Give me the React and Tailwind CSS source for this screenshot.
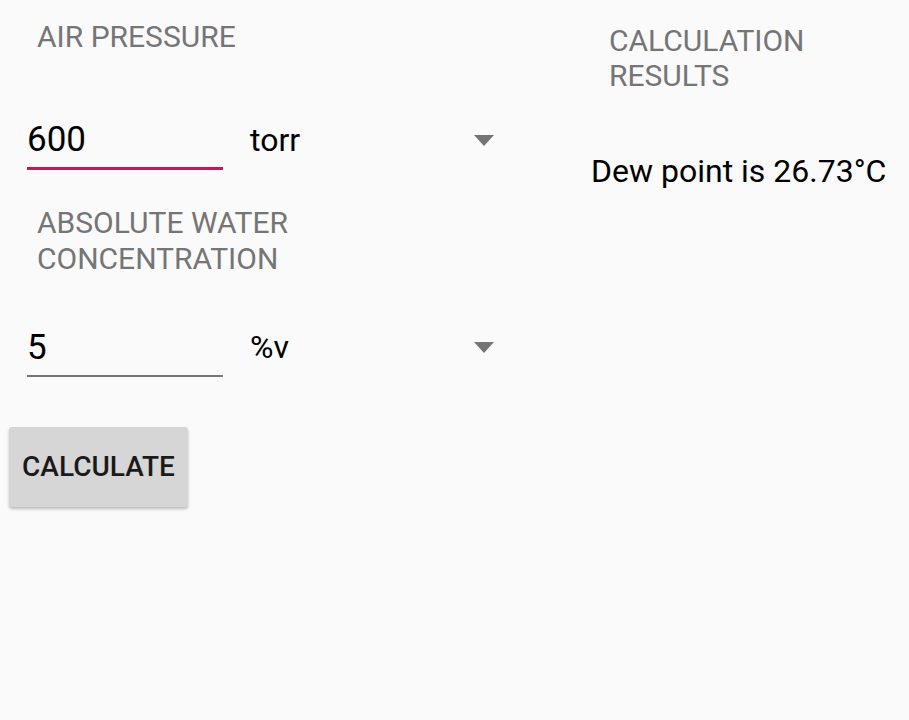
export default function App() {
  return (
    <div className="w-[909px] h-[720px] bg-[#fafafa] flex font-['Roboto',sans-serif] overflow-hidden">
      {/* Inputs column */}
      <div className="w-[560px] pl-[27px] pt-[19px] flex flex-col items-start">
        <div className="ml-[10px] text-[30px] leading-[36px] text-[#757575]">AIR PRESSURE</div>

        <div className="mt-[64px] flex items-center">
          <div className="w-[196px] text-[35px] leading-[41px] text-black pb-[7px] border-b-[3px] border-[#c2185b]">
            600
          </div>
          <div className="ml-[27px] w-[244px] flex items-center justify-between -mt-[9px]">
            <span className="text-[32px] leading-[41px] text-black">torr</span>
            <span className="w-0 h-0 border-l-[10px] border-r-[10px] border-t-[11px] border-l-transparent border-r-transparent border-t-[#757575]" />
          </div>
        </div>

        <div className="mt-[35px] ml-[10px] w-[290px] text-[30px] leading-[36px] text-[#757575]">
          ABSOLUTE WATER CONCENTRATION
        </div>

        <div className="mt-[50px] flex items-center">
          <div className="w-[196px] text-[35px] leading-[41px] text-black pb-[7px] border-b-2 border-[#757575]">
            5
          </div>
          <div className="ml-[27px] w-[244px] flex items-center justify-between -mt-[9px]">
            <span className="text-[32px] leading-[41px] text-black">%v</span>
            <span className="w-0 h-0 border-l-[10px] border-r-[10px] border-t-[11px] border-l-transparent border-r-transparent border-t-[#757575]" />
          </div>
        </div>

        <button className="mt-[50px] -ml-[18px] w-[179px] h-[80px] bg-[#d6d6d6] rounded-[3px] shadow-[0_2px_3px_rgba(0,0,0,0.25)] text-[28px] font-medium text-[#1a1a1a] flex items-center justify-center">
          CALCULATE
        </button>
      </div>

      {/* Results column */}
      <div className="ml-[31px] pt-[23px] flex flex-col">
        <div className="ml-[18px] w-[230px] text-[30px] leading-[35px] text-[#757575]">
          CALCULATION RESULTS
        </div>
        <div className="mt-[59px] text-[32px] leading-[39px] text-black whitespace-nowrap">
          Dew point is 26.73°C
        </div>
      </div>
    </div>
  );
}
